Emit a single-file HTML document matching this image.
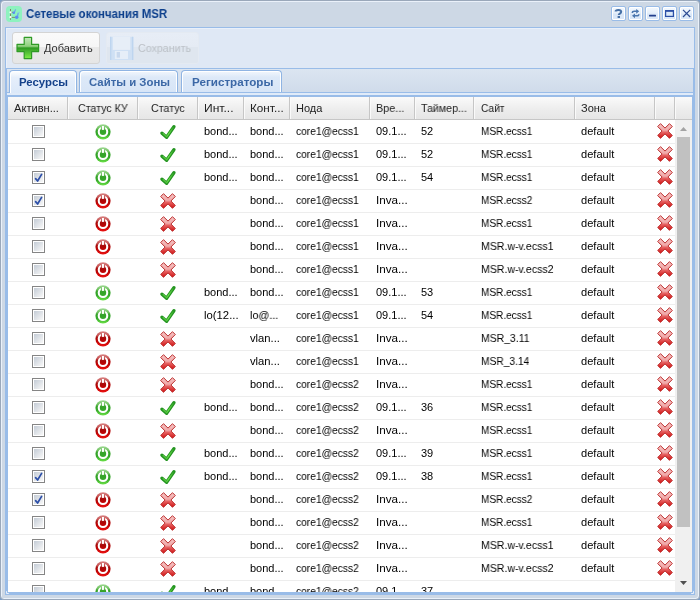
<!DOCTYPE html>
<html><head><meta charset="utf-8"><style>
*{box-sizing:border-box}
html,body{margin:0;padding:0;width:700px;height:600px;overflow:hidden;background:#7d9dc6;font-family:"Liberation Sans",sans-serif}
.txt,.hd,.tabt,.title{will-change:transform}
.a{position:absolute}
#win{position:absolute;left:0;top:0;width:700px;height:600px;background:#cdd8e5;border:1px solid #9aa8ba;border-radius:4px;box-shadow:inset 1px 1px 0 #eaf1fa,inset -1px -1px 0 #eaf1fa;overflow:hidden}
.title{left:26px;top:7px;font-weight:bold;font-size:12px;color:#0c3f8c;white-space:nowrap;line-height:14px}
.tool{top:6px;width:15px;height:15px;border:1px solid #99bce8;border-radius:2px;background:linear-gradient(#f4f9fe,#e6f0fb 45%,#d9e7f8 55%,#dbe8f8);box-shadow:inset 0 0 0 1px #fff}
.tool svg{position:absolute;left:0;top:0}
.txt{font-size:11px;color:#000;white-space:nowrap;line-height:13px}
.hd{font-size:11px;color:#222;white-space:nowrap;line-height:13px;top:102px}
.sep{top:97px;width:1px;height:22px;background:#c6c6c6;box-shadow:1px 0 0 #fafafa}
.rb{left:8px;width:667px;height:1px;background:#ededed}
.tab{top:70px;height:25px;border:1px solid #8fb4e3;border-bottom:none;border-radius:4px 4px 0 0;box-shadow:inset 1px 1px 0 #fff,inset -1px 0 0 #fff}
.tabt{font-weight:bold;font-size:11px;white-space:nowrap;line-height:13px}
</style></head><body><svg width="0" height="0" style="position:absolute">
<defs>
<linearGradient id="gG" gradientUnits="userSpaceOnUse" x1="0" y1="0" x2="0" y2="16"><stop offset="0" stop-color="#a6dc9c"/><stop offset="0.28" stop-color="#6cc05c"/><stop offset="0.42" stop-color="#34a228"/><stop offset="0.65" stop-color="#36a82a"/><stop offset="1" stop-color="#72e84c"/></linearGradient>
<linearGradient id="gR" gradientUnits="userSpaceOnUse" x1="0" y1="0" x2="0" y2="16"><stop offset="0" stop-color="#dc8c8c"/><stop offset="0.28" stop-color="#c45050"/><stop offset="0.42" stop-color="#a80808"/><stop offset="0.65" stop-color="#c00404"/><stop offset="1" stop-color="#f01414"/></linearGradient>
<linearGradient id="gX" x1="0" y1="0" x2="0" y2="1"><stop offset="0" stop-color="#f6c4c4"/><stop offset="0.45" stop-color="#f0a8a8"/><stop offset="0.6" stop-color="#e66060"/><stop offset="1" stop-color="#d01010"/></linearGradient>
<linearGradient id="gC" gradientUnits="userSpaceOnUse" x1="0" y1="14" x2="14" y2="2"><stop offset="0" stop-color="#2a9a22"/><stop offset="0.5" stop-color="#6ee04e"/><stop offset="1" stop-color="#2a9a22"/></linearGradient>
<linearGradient id="gCB" x1="0" y1="0" x2="1" y2="1"><stop offset="0" stop-color="#c4ccd6"/><stop offset="1" stop-color="#f8f8f8"/></linearGradient>
<linearGradient id="gP" x1="0" y1="0" x2="0" y2="1"><stop offset="0" stop-color="#c4e8bc"/><stop offset="0.42" stop-color="#8ed07c"/><stop offset="0.5" stop-color="#2e9a22"/><stop offset="0.62" stop-color="#44b030"/><stop offset="1" stop-color="#80f048"/></linearGradient>
<symbol id="pw" viewBox="0 0 16 16"><circle cx="8" cy="7.85" r="7.6"/><circle cx="8" cy="7.75" r="4.25" fill="none" stroke="#fff" stroke-width="2.1"/><rect x="5.9" y="1" width="4.2" height="5.3"/><rect x="6.95" y="2" width="2" height="3.9" fill="#fff"/></symbol>
<symbol id="ck" viewBox="0 0 16 16"><polyline points="2,9.2 6.6,13.3 13.9,2.7" fill="none" stroke="#239420" stroke-width="3.3" stroke-linecap="round" stroke-linejoin="round"/><polyline points="3,9.6 6.6,12.8 13.3,3.4" fill="none" stroke="url(#gC)" stroke-width="1.3" stroke-linecap="round" stroke-linejoin="round"/></symbol>
<symbol id="xx" viewBox="0 0 16 16"><path d="M0.7,3.5 L3.5,0.7 L8,5.1 L12.5,0.7 L15.3,3.5 L10.9,8 L15.3,12.5 L12.5,15.3 L8,10.9 L3.5,15.3 L0.7,12.5 L5.1,8 Z" fill="url(#gX)" stroke="#bc2e2e" stroke-width="1" stroke-linejoin="round"/></symbol>
<symbol id="cb" viewBox="0 0 13 13"><rect x="0.5" y="0.5" width="12" height="12" fill="#fff" stroke="#858585"/><rect x="2" y="2" width="9" height="9" fill="url(#gCB)"/></symbol>
<symbol id="cbc" viewBox="0 0 13 13"><rect x="0.5" y="0.5" width="12" height="12" fill="#fff" stroke="#858585"/><rect x="2" y="2" width="9" height="9" fill="url(#gCB)"/><polyline points="3.6,7.6 5.6,10 9.6,3.4" fill="none" stroke="#2d4fa8" stroke-width="1.7" stroke-linecap="round" stroke-linejoin="round"/></symbol>
</defs></svg><div id="win"></div><div class="a" style="left:6px;top:6px;width:16px;height:16px;border-radius:4px;background:#8ef2bf"></div>
<svg class="a" style="left:6px;top:6px" width="16" height="16" viewBox="0 0 16 16"><path d="M4.5,3 V13.8" stroke="#7a8860" stroke-width="1"/><path d="M4.6,6.3 H7.2 M4.6,11.4 H9.2" stroke="#7a8860" stroke-width="0.9"/><circle cx="4.5" cy="6.3" r="1.15" fill="#fff"/><circle cx="4.5" cy="11.2" r="1.15" fill="#fff"/><path d="M8.4,6.4 L9.6,3.4 M11.5,10.6 L12.2,6.8" stroke="#6a9cf2" stroke-width="1.2"/><circle cx="7.8" cy="6.7" r="1.3" fill="#5a8ef0"/><circle cx="10.7" cy="11.2" r="1.75" fill="#5a8ef0"/><path d="M12.2,7 L13.4,6.6" stroke="#8ab4f4" stroke-width="1"/></svg>
<div class="a title" style="transform:scaleX(0.951);transform-origin:0 0">Сетевые окончания MSR</div>
<div class="a tool" style="left:611px"><svg width="15" height="15" viewBox="0 0 15 15" style="left:-1px;top:-1px"><path d="M4.6,5.6 C4.6,3.4 10.2,3.2 10.2,5.8 C10.2,7.6 7.8,7.6 7.8,9" fill="none" stroke="#4670a6" stroke-width="2"/><rect x="6.6" y="10" width="2.4" height="2" fill="#4670a6"/></svg></div>
<div class="a tool" style="left:628px"><svg width="15" height="15" viewBox="0 0 15 15" style="left:-1px;top:-1px"><path d="M4.3,7 Q4.3,5.3 6.2,5.3 H9" fill="none" stroke="#4a76ae" stroke-width="1.5"/><path d="M8.2,2.9 L11.2,5.3 L8.2,7.7 Z" fill="#4a76ae"/><path d="M10.8,8.2 Q10.8,9.8 8.9,9.8 H6.2" fill="none" stroke="#4a76ae" stroke-width="1.5"/><path d="M7,7.4 L4,9.8 L7,12.2 Z" fill="#4a76ae"/></svg></div>
<div class="a tool" style="left:645px"><svg width="15" height="15" viewBox="0 0 15 15" style="left:-1px;top:-1px"><rect x="4" y="8.8" width="7" height="1.8" rx="0.6" fill="#223f8c"/></svg></div>
<div class="a tool" style="left:662px"><svg width="15" height="15" viewBox="0 0 15 15" style="left:-1px;top:-1px"><rect x="3.6" y="4.6" width="7.8" height="5.8" fill="#dbe8f8" stroke="#2c4fa6" stroke-width="1.2"/><rect x="3" y="4" width="9" height="1.8" fill="#2c4fa6"/></svg></div>
<div class="a tool" style="left:679px"><svg width="15" height="15" viewBox="0 0 15 15" style="left:-1px;top:-1px"><path d="M4,3.8 L11.2,11 M11.2,3.8 L4,11" stroke="#2c4a92" stroke-width="1.2"/></svg></div>
<div class="a" style="left:5px;top:27px;width:690px;height:42px;background:#dfe8f5;border:1px solid #99bce8;box-shadow:inset 1px 1px 0 #e9f0fa"></div>
<div class="a" style="left:12px;top:32px;width:88px;height:32px;border:1px solid #d4d4d4;border-radius:3px;background:linear-gradient(#fafafa 0,#f6f6f6 47%,#e9e9e9 47%,#e6e6e6 100%)"></div>
<svg class="a" style="left:16px;top:36px" width="24" height="24" viewBox="0 0 24 24"><path d="M8.2,1.4 H15.6 V8.4 H22.6 V15.6 H15.6 V22.6 H8.2 V15.6 H1 V8.4 H8.2 Z" fill="url(#gP)" stroke="#2f9a26" stroke-width="1.2" stroke-linejoin="round"/></svg>
<div class="a txt" style="left:44px;top:42px;color:#333;transform:scaleX(0.994);transform-origin:0 0">Добавить</div>
<div class="a" style="left:106px;top:32px;width:93px;height:32px;border:1px solid #e4eaf2;border-radius:3px;background:linear-gradient(#e7edf6 0,#e5ebf4 47%,#dfe6ef 47%,#dfe6ef 100%)"></div>
<svg class="a" style="left:109px;top:36px" width="25" height="25" viewBox="0 0 25 25"><rect x="1" y="0.8" width="23.3" height="23.2" fill="#cfe0f4"/><rect x="1" y="0.8" width="1.3" height="23.2" fill="#bed5ef"/><rect x="23" y="0.8" width="1.3" height="23.2" fill="#bed5ef"/><rect x="3.8" y="0.8" width="17.5" height="13.1" fill="#e7eef7"/><rect x="5.9" y="15" width="13.1" height="8" fill="#e6eef8"/><rect x="7.7" y="16" width="3.3" height="5.6" fill="#c8d8ed"/></svg>
<div class="a txt" style="left:138px;top:42px;color:#bcc1c7;transform:scaleX(0.969);transform-origin:0 0">Сохранить</div>
<div class="a" style="left:5px;top:68px;width:690px;height:527px;background:#99bce8"></div>
<div class="a" style="left:7px;top:69px;width:686px;height:24px;background:linear-gradient(#dbe5f1,#cfdbea)"></div>
<div class="a" style="left:7px;top:92px;width:686px;height:1px;background:#99bce8"></div>
<div class="a" style="left:7px;top:93px;width:686px;height:2px;background:#e0ebf9"></div>
<div class="a tab" style="left:9px;width:68px;height:23px;background:linear-gradient(#fff 0,#e6effb 30%,#dbe8f9 100%)"></div>
<div class="a tabt" style="left:19px;top:76px;color:#15428b;transform:scaleX(1.0348);transform-origin:0 0">Ресурсы</div>
<div class="a tab" style="left:79px;width:99px;height:22px;background:linear-gradient(#f2f7fd 0,#dde9f8 30%,#d7e5f7 100%)"></div>
<div class="a tabt" style="left:89px;top:76px;color:#3c68a6;transform:scaleX(1.0351);transform-origin:0 0">Сайты и Зоны</div>
<div class="a tab" style="left:181px;width:101px;height:22px;background:linear-gradient(#f2f7fd 0,#dde9f8 30%,#d7e5f7 100%)"></div>
<div class="a tabt" style="left:192px;top:76px;color:#3c68a6;transform:scaleX(1.0573);transform-origin:0 0">Регистраторы</div>
<div class="a" style="left:8px;top:97px;width:684px;height:495px;background:#fff"></div>
<div class="a" style="left:8px;top:97px;width:684px;height:23px;background:linear-gradient(#fafafa,#ececec 60%,#e6e6e6);border-bottom:1px solid #c6c6c6"></div>
<div class="a sep" style="left:67px"></div>
<div class="a sep" style="left:137px"></div>
<div class="a sep" style="left:197px"></div>
<div class="a sep" style="left:243px"></div>
<div class="a sep" style="left:289px"></div>
<div class="a sep" style="left:369px"></div>
<div class="a sep" style="left:414px"></div>
<div class="a sep" style="left:473px"></div>
<div class="a sep" style="left:574px"></div>
<div class="a sep" style="left:654px"></div>
<div class="a sep" style="left:674px"></div>
<div class="a hd" style="left:14px;transform:scaleX(1.0091);transform-origin:0 0">Активн...</div>
<div class="a hd" style="left:78px;transform:scaleX(0.9686);transform-origin:0 0">Статус КУ</div>
<div class="a hd" style="left:151px;transform:scaleX(0.9706);transform-origin:0 0">Статус</div>
<div class="a hd" style="left:204px;transform:scaleX(1.096);transform-origin:0 0">Инт...</div>
<div class="a hd" style="left:250px;transform:scaleX(1.0667);transform-origin:0 0">Конт...</div>
<div class="a hd" style="left:296px;transform:scaleX(0.992);transform-origin:0 0">Нода</div>
<div class="a hd" style="left:376px;transform:scaleX(0.9815);transform-origin:0 0">Вре...</div>
<div class="a hd" style="left:421px;transform:scaleX(0.966);transform-origin:0 0">Таймер...</div>
<div class="a hd" style="left:481px;transform:scaleX(0.928);transform-origin:0 0">Сайт</div>
<div class="a hd" style="left:581px;transform:scaleX(0.9917);transform-origin:0 0">Зона</div>
<div class="a" style="left:0;top:0;width:692px;height:592px;overflow:hidden">
<div class="a rb" style="top:143px"></div>
<svg class="a" style="left:32px;top:125px" width="13" height="13"><use href="#cb"/></svg>
<svg class="a" style="left:95px;top:124px;fill:url(#gG)" width="16" height="16"><use href="#pw"/></svg>
<svg class="a" style="left:160px;top:124px" width="16" height="16"><use href="#ck"/></svg>
<div class="a txt" style="left:204px;top:125px;transform:scaleX(0.9938);transform-origin:0 0">bond...</div>
<div class="a txt" style="left:250px;top:125px;transform:scaleX(0.9938);transform-origin:0 0">bond...</div>
<div class="a txt" style="left:296px;top:125px;transform:scaleX(0.9313);transform-origin:0 0">core1@ecss1</div>
<div class="a txt" style="left:376px;top:125px;transform:scaleX(0.99);transform-origin:0 0">09.1...</div>
<div class="a txt" style="left:421px;top:125px;transform:scaleX(1.0);transform-origin:0 0">52</div>
<div class="a txt" style="left:481px;top:125px;transform:scaleX(0.9145);transform-origin:0 0">MSR.ecss1</div>
<div class="a txt" style="left:581px;top:125px;transform:scaleX(1.0061);transform-origin:0 0">default</div>
<svg class="a" style="left:657px;top:123px" width="16" height="16"><use href="#xx"/></svg>
<div class="a rb" style="top:166px"></div>
<svg class="a" style="left:32px;top:148px" width="13" height="13"><use href="#cb"/></svg>
<svg class="a" style="left:95px;top:147px;fill:url(#gG)" width="16" height="16"><use href="#pw"/></svg>
<svg class="a" style="left:160px;top:147px" width="16" height="16"><use href="#ck"/></svg>
<div class="a txt" style="left:204px;top:148px;transform:scaleX(0.9938);transform-origin:0 0">bond...</div>
<div class="a txt" style="left:250px;top:148px;transform:scaleX(0.9938);transform-origin:0 0">bond...</div>
<div class="a txt" style="left:296px;top:148px;transform:scaleX(0.9313);transform-origin:0 0">core1@ecss1</div>
<div class="a txt" style="left:376px;top:148px;transform:scaleX(0.99);transform-origin:0 0">09.1...</div>
<div class="a txt" style="left:421px;top:148px;transform:scaleX(1.0);transform-origin:0 0">52</div>
<div class="a txt" style="left:481px;top:148px;transform:scaleX(0.9145);transform-origin:0 0">MSR.ecss1</div>
<div class="a txt" style="left:581px;top:148px;transform:scaleX(1.0061);transform-origin:0 0">default</div>
<svg class="a" style="left:657px;top:146px" width="16" height="16"><use href="#xx"/></svg>
<div class="a rb" style="top:189px"></div>
<svg class="a" style="left:32px;top:171px" width="13" height="13"><use href="#cbc"/></svg>
<svg class="a" style="left:95px;top:170px;fill:url(#gG)" width="16" height="16"><use href="#pw"/></svg>
<svg class="a" style="left:160px;top:170px" width="16" height="16"><use href="#ck"/></svg>
<div class="a txt" style="left:204px;top:171px;transform:scaleX(0.9938);transform-origin:0 0">bond...</div>
<div class="a txt" style="left:250px;top:171px;transform:scaleX(0.9938);transform-origin:0 0">bond...</div>
<div class="a txt" style="left:296px;top:171px;transform:scaleX(0.9313);transform-origin:0 0">core1@ecss1</div>
<div class="a txt" style="left:376px;top:171px;transform:scaleX(0.99);transform-origin:0 0">09.1...</div>
<div class="a txt" style="left:421px;top:171px;transform:scaleX(1);transform-origin:0 0">54</div>
<div class="a txt" style="left:481px;top:171px;transform:scaleX(0.9145);transform-origin:0 0">MSR.ecss1</div>
<div class="a txt" style="left:581px;top:171px;transform:scaleX(1.0061);transform-origin:0 0">default</div>
<svg class="a" style="left:657px;top:169px" width="16" height="16"><use href="#xx"/></svg>
<div class="a rb" style="top:212px"></div>
<svg class="a" style="left:32px;top:194px" width="13" height="13"><use href="#cbc"/></svg>
<svg class="a" style="left:95px;top:193px;fill:url(#gR)" width="16" height="16"><use href="#pw"/></svg>
<svg class="a" style="left:160px;top:193px" width="16" height="16"><use href="#xx"/></svg>
<div class="a txt" style="left:250px;top:194px;transform:scaleX(0.9938);transform-origin:0 0">bond...</div>
<div class="a txt" style="left:296px;top:194px;transform:scaleX(0.9313);transform-origin:0 0">core1@ecss1</div>
<div class="a txt" style="left:376px;top:194px;transform:scaleX(1.0607);transform-origin:0 0">Inva...</div>
<div class="a txt" style="left:481px;top:194px;transform:scaleX(0.9145);transform-origin:0 0">MSR.ecss2</div>
<div class="a txt" style="left:581px;top:194px;transform:scaleX(1.0061);transform-origin:0 0">default</div>
<svg class="a" style="left:657px;top:192px" width="16" height="16"><use href="#xx"/></svg>
<div class="a rb" style="top:235px"></div>
<svg class="a" style="left:32px;top:217px" width="13" height="13"><use href="#cb"/></svg>
<svg class="a" style="left:95px;top:216px;fill:url(#gR)" width="16" height="16"><use href="#pw"/></svg>
<svg class="a" style="left:160px;top:216px" width="16" height="16"><use href="#xx"/></svg>
<div class="a txt" style="left:250px;top:217px;transform:scaleX(0.9938);transform-origin:0 0">bond...</div>
<div class="a txt" style="left:296px;top:217px;transform:scaleX(0.9313);transform-origin:0 0">core1@ecss1</div>
<div class="a txt" style="left:376px;top:217px;transform:scaleX(1.0607);transform-origin:0 0">Inva...</div>
<div class="a txt" style="left:481px;top:217px;transform:scaleX(0.9145);transform-origin:0 0">MSR.ecss1</div>
<div class="a txt" style="left:581px;top:217px;transform:scaleX(1.0061);transform-origin:0 0">default</div>
<svg class="a" style="left:657px;top:215px" width="16" height="16"><use href="#xx"/></svg>
<div class="a rb" style="top:258px"></div>
<svg class="a" style="left:32px;top:240px" width="13" height="13"><use href="#cb"/></svg>
<svg class="a" style="left:95px;top:239px;fill:url(#gR)" width="16" height="16"><use href="#pw"/></svg>
<svg class="a" style="left:160px;top:239px" width="16" height="16"><use href="#xx"/></svg>
<div class="a txt" style="left:250px;top:240px;transform:scaleX(0.9938);transform-origin:0 0">bond...</div>
<div class="a txt" style="left:296px;top:240px;transform:scaleX(0.9313);transform-origin:0 0">core1@ecss1</div>
<div class="a txt" style="left:376px;top:240px;transform:scaleX(1.0607);transform-origin:0 0">Inva...</div>
<div class="a txt" style="left:481px;top:240px;transform:scaleX(0.9595);transform-origin:0 0">MSR.w-v.ecss1</div>
<div class="a txt" style="left:581px;top:240px;transform:scaleX(1.0061);transform-origin:0 0">default</div>
<svg class="a" style="left:657px;top:238px" width="16" height="16"><use href="#xx"/></svg>
<div class="a rb" style="top:281px"></div>
<svg class="a" style="left:32px;top:263px" width="13" height="13"><use href="#cb"/></svg>
<svg class="a" style="left:95px;top:262px;fill:url(#gR)" width="16" height="16"><use href="#pw"/></svg>
<svg class="a" style="left:160px;top:262px" width="16" height="16"><use href="#xx"/></svg>
<div class="a txt" style="left:250px;top:263px;transform:scaleX(0.9938);transform-origin:0 0">bond...</div>
<div class="a txt" style="left:296px;top:263px;transform:scaleX(0.9313);transform-origin:0 0">core1@ecss1</div>
<div class="a txt" style="left:376px;top:263px;transform:scaleX(1.0607);transform-origin:0 0">Inva...</div>
<div class="a txt" style="left:481px;top:263px;transform:scaleX(0.9595);transform-origin:0 0">MSR.w-v.ecss2</div>
<div class="a txt" style="left:581px;top:263px;transform:scaleX(1.0061);transform-origin:0 0">default</div>
<svg class="a" style="left:657px;top:261px" width="16" height="16"><use href="#xx"/></svg>
<div class="a rb" style="top:304px"></div>
<svg class="a" style="left:32px;top:286px" width="13" height="13"><use href="#cb"/></svg>
<svg class="a" style="left:95px;top:285px;fill:url(#gG)" width="16" height="16"><use href="#pw"/></svg>
<svg class="a" style="left:160px;top:285px" width="16" height="16"><use href="#ck"/></svg>
<div class="a txt" style="left:204px;top:286px;transform:scaleX(0.9938);transform-origin:0 0">bond...</div>
<div class="a txt" style="left:250px;top:286px;transform:scaleX(0.9938);transform-origin:0 0">bond...</div>
<div class="a txt" style="left:296px;top:286px;transform:scaleX(0.9313);transform-origin:0 0">core1@ecss1</div>
<div class="a txt" style="left:376px;top:286px;transform:scaleX(0.99);transform-origin:0 0">09.1...</div>
<div class="a txt" style="left:421px;top:286px;transform:scaleX(1);transform-origin:0 0">53</div>
<div class="a txt" style="left:481px;top:286px;transform:scaleX(0.9145);transform-origin:0 0">MSR.ecss1</div>
<div class="a txt" style="left:581px;top:286px;transform:scaleX(1.0061);transform-origin:0 0">default</div>
<svg class="a" style="left:657px;top:284px" width="16" height="16"><use href="#xx"/></svg>
<div class="a rb" style="top:327px"></div>
<svg class="a" style="left:32px;top:309px" width="13" height="13"><use href="#cb"/></svg>
<svg class="a" style="left:95px;top:308px;fill:url(#gG)" width="16" height="16"><use href="#pw"/></svg>
<svg class="a" style="left:160px;top:308px" width="16" height="16"><use href="#ck"/></svg>
<div class="a txt" style="left:204px;top:309px;transform:scaleX(1.0281);transform-origin:0 0">lo(12...</div>
<div class="a txt" style="left:250px;top:309px;transform:scaleX(0.9778);transform-origin:0 0">lo@...</div>
<div class="a txt" style="left:296px;top:309px;transform:scaleX(0.9313);transform-origin:0 0">core1@ecss1</div>
<div class="a txt" style="left:376px;top:309px;transform:scaleX(0.99);transform-origin:0 0">09.1...</div>
<div class="a txt" style="left:421px;top:309px;transform:scaleX(1);transform-origin:0 0">54</div>
<div class="a txt" style="left:481px;top:309px;transform:scaleX(0.9145);transform-origin:0 0">MSR.ecss1</div>
<div class="a txt" style="left:581px;top:309px;transform:scaleX(1.0061);transform-origin:0 0">default</div>
<svg class="a" style="left:657px;top:307px" width="16" height="16"><use href="#xx"/></svg>
<div class="a rb" style="top:350px"></div>
<svg class="a" style="left:32px;top:332px" width="13" height="13"><use href="#cb"/></svg>
<svg class="a" style="left:95px;top:331px;fill:url(#gR)" width="16" height="16"><use href="#pw"/></svg>
<svg class="a" style="left:160px;top:331px" width="16" height="16"><use href="#xx"/></svg>
<div class="a txt" style="left:250px;top:332px;transform:scaleX(1.0214);transform-origin:0 0">vlan...</div>
<div class="a txt" style="left:296px;top:332px;transform:scaleX(0.9313);transform-origin:0 0">core1@ecss1</div>
<div class="a txt" style="left:376px;top:332px;transform:scaleX(1.0607);transform-origin:0 0">Inva...</div>
<div class="a txt" style="left:481px;top:332px;transform:scaleX(0.948);transform-origin:0 0">MSR_3.11</div>
<div class="a txt" style="left:581px;top:332px;transform:scaleX(1.0061);transform-origin:0 0">default</div>
<svg class="a" style="left:657px;top:330px" width="16" height="16"><use href="#xx"/></svg>
<div class="a rb" style="top:373px"></div>
<svg class="a" style="left:32px;top:355px" width="13" height="13"><use href="#cb"/></svg>
<svg class="a" style="left:95px;top:354px;fill:url(#gR)" width="16" height="16"><use href="#pw"/></svg>
<svg class="a" style="left:160px;top:354px" width="16" height="16"><use href="#xx"/></svg>
<div class="a txt" style="left:250px;top:355px;transform:scaleX(1.0214);transform-origin:0 0">vlan...</div>
<div class="a txt" style="left:296px;top:355px;transform:scaleX(0.9313);transform-origin:0 0">core1@ecss1</div>
<div class="a txt" style="left:376px;top:355px;transform:scaleX(1.0607);transform-origin:0 0">Inva...</div>
<div class="a txt" style="left:481px;top:355px;transform:scaleX(0.9294);transform-origin:0 0">MSR_3.14</div>
<div class="a txt" style="left:581px;top:355px;transform:scaleX(1.0061);transform-origin:0 0">default</div>
<svg class="a" style="left:657px;top:353px" width="16" height="16"><use href="#xx"/></svg>
<div class="a rb" style="top:396px"></div>
<svg class="a" style="left:32px;top:378px" width="13" height="13"><use href="#cb"/></svg>
<svg class="a" style="left:95px;top:377px;fill:url(#gR)" width="16" height="16"><use href="#pw"/></svg>
<svg class="a" style="left:160px;top:377px" width="16" height="16"><use href="#xx"/></svg>
<div class="a txt" style="left:250px;top:378px;transform:scaleX(0.9938);transform-origin:0 0">bond...</div>
<div class="a txt" style="left:296px;top:378px;transform:scaleX(0.9313);transform-origin:0 0">core1@ecss2</div>
<div class="a txt" style="left:376px;top:378px;transform:scaleX(1.0607);transform-origin:0 0">Inva...</div>
<div class="a txt" style="left:481px;top:378px;transform:scaleX(0.9145);transform-origin:0 0">MSR.ecss1</div>
<div class="a txt" style="left:581px;top:378px;transform:scaleX(1.0061);transform-origin:0 0">default</div>
<svg class="a" style="left:657px;top:376px" width="16" height="16"><use href="#xx"/></svg>
<div class="a rb" style="top:419px"></div>
<svg class="a" style="left:32px;top:401px" width="13" height="13"><use href="#cb"/></svg>
<svg class="a" style="left:95px;top:400px;fill:url(#gG)" width="16" height="16"><use href="#pw"/></svg>
<svg class="a" style="left:160px;top:400px" width="16" height="16"><use href="#ck"/></svg>
<div class="a txt" style="left:204px;top:401px;transform:scaleX(0.9938);transform-origin:0 0">bond...</div>
<div class="a txt" style="left:250px;top:401px;transform:scaleX(0.9938);transform-origin:0 0">bond...</div>
<div class="a txt" style="left:296px;top:401px;transform:scaleX(0.9313);transform-origin:0 0">core1@ecss2</div>
<div class="a txt" style="left:376px;top:401px;transform:scaleX(0.99);transform-origin:0 0">09.1...</div>
<div class="a txt" style="left:421px;top:401px;transform:scaleX(1);transform-origin:0 0">36</div>
<div class="a txt" style="left:481px;top:401px;transform:scaleX(0.9145);transform-origin:0 0">MSR.ecss1</div>
<div class="a txt" style="left:581px;top:401px;transform:scaleX(1.0061);transform-origin:0 0">default</div>
<svg class="a" style="left:657px;top:399px" width="16" height="16"><use href="#xx"/></svg>
<div class="a rb" style="top:442px"></div>
<svg class="a" style="left:32px;top:424px" width="13" height="13"><use href="#cb"/></svg>
<svg class="a" style="left:95px;top:423px;fill:url(#gR)" width="16" height="16"><use href="#pw"/></svg>
<svg class="a" style="left:160px;top:423px" width="16" height="16"><use href="#xx"/></svg>
<div class="a txt" style="left:250px;top:424px;transform:scaleX(0.9938);transform-origin:0 0">bond...</div>
<div class="a txt" style="left:296px;top:424px;transform:scaleX(0.9313);transform-origin:0 0">core1@ecss2</div>
<div class="a txt" style="left:376px;top:424px;transform:scaleX(1.0607);transform-origin:0 0">Inva...</div>
<div class="a txt" style="left:481px;top:424px;transform:scaleX(0.9145);transform-origin:0 0">MSR.ecss1</div>
<div class="a txt" style="left:581px;top:424px;transform:scaleX(1.0061);transform-origin:0 0">default</div>
<svg class="a" style="left:657px;top:422px" width="16" height="16"><use href="#xx"/></svg>
<div class="a rb" style="top:465px"></div>
<svg class="a" style="left:32px;top:447px" width="13" height="13"><use href="#cb"/></svg>
<svg class="a" style="left:95px;top:446px;fill:url(#gG)" width="16" height="16"><use href="#pw"/></svg>
<svg class="a" style="left:160px;top:446px" width="16" height="16"><use href="#ck"/></svg>
<div class="a txt" style="left:204px;top:447px;transform:scaleX(0.9938);transform-origin:0 0">bond...</div>
<div class="a txt" style="left:250px;top:447px;transform:scaleX(0.9938);transform-origin:0 0">bond...</div>
<div class="a txt" style="left:296px;top:447px;transform:scaleX(0.9313);transform-origin:0 0">core1@ecss2</div>
<div class="a txt" style="left:376px;top:447px;transform:scaleX(0.99);transform-origin:0 0">09.1...</div>
<div class="a txt" style="left:421px;top:447px;transform:scaleX(1);transform-origin:0 0">39</div>
<div class="a txt" style="left:481px;top:447px;transform:scaleX(0.9145);transform-origin:0 0">MSR.ecss1</div>
<div class="a txt" style="left:581px;top:447px;transform:scaleX(1.0061);transform-origin:0 0">default</div>
<svg class="a" style="left:657px;top:445px" width="16" height="16"><use href="#xx"/></svg>
<div class="a rb" style="top:488px"></div>
<svg class="a" style="left:32px;top:470px" width="13" height="13"><use href="#cbc"/></svg>
<svg class="a" style="left:95px;top:469px;fill:url(#gG)" width="16" height="16"><use href="#pw"/></svg>
<svg class="a" style="left:160px;top:469px" width="16" height="16"><use href="#ck"/></svg>
<div class="a txt" style="left:204px;top:470px;transform:scaleX(0.9938);transform-origin:0 0">bond...</div>
<div class="a txt" style="left:250px;top:470px;transform:scaleX(0.9938);transform-origin:0 0">bond...</div>
<div class="a txt" style="left:296px;top:470px;transform:scaleX(0.9313);transform-origin:0 0">core1@ecss2</div>
<div class="a txt" style="left:376px;top:470px;transform:scaleX(0.99);transform-origin:0 0">09.1...</div>
<div class="a txt" style="left:421px;top:470px;transform:scaleX(1);transform-origin:0 0">38</div>
<div class="a txt" style="left:481px;top:470px;transform:scaleX(0.9145);transform-origin:0 0">MSR.ecss1</div>
<div class="a txt" style="left:581px;top:470px;transform:scaleX(1.0061);transform-origin:0 0">default</div>
<svg class="a" style="left:657px;top:468px" width="16" height="16"><use href="#xx"/></svg>
<div class="a rb" style="top:511px"></div>
<svg class="a" style="left:32px;top:493px" width="13" height="13"><use href="#cbc"/></svg>
<svg class="a" style="left:95px;top:492px;fill:url(#gR)" width="16" height="16"><use href="#pw"/></svg>
<svg class="a" style="left:160px;top:492px" width="16" height="16"><use href="#xx"/></svg>
<div class="a txt" style="left:250px;top:493px;transform:scaleX(0.9938);transform-origin:0 0">bond...</div>
<div class="a txt" style="left:296px;top:493px;transform:scaleX(0.9313);transform-origin:0 0">core1@ecss2</div>
<div class="a txt" style="left:376px;top:493px;transform:scaleX(1.0607);transform-origin:0 0">Inva...</div>
<div class="a txt" style="left:481px;top:493px;transform:scaleX(0.9145);transform-origin:0 0">MSR.ecss2</div>
<div class="a txt" style="left:581px;top:493px;transform:scaleX(1.0061);transform-origin:0 0">default</div>
<svg class="a" style="left:657px;top:491px" width="16" height="16"><use href="#xx"/></svg>
<div class="a rb" style="top:534px"></div>
<svg class="a" style="left:32px;top:516px" width="13" height="13"><use href="#cb"/></svg>
<svg class="a" style="left:95px;top:515px;fill:url(#gR)" width="16" height="16"><use href="#pw"/></svg>
<svg class="a" style="left:160px;top:515px" width="16" height="16"><use href="#xx"/></svg>
<div class="a txt" style="left:250px;top:516px;transform:scaleX(0.9938);transform-origin:0 0">bond...</div>
<div class="a txt" style="left:296px;top:516px;transform:scaleX(0.9313);transform-origin:0 0">core1@ecss2</div>
<div class="a txt" style="left:376px;top:516px;transform:scaleX(1.0607);transform-origin:0 0">Inva...</div>
<div class="a txt" style="left:481px;top:516px;transform:scaleX(0.9145);transform-origin:0 0">MSR.ecss1</div>
<div class="a txt" style="left:581px;top:516px;transform:scaleX(1.0061);transform-origin:0 0">default</div>
<svg class="a" style="left:657px;top:514px" width="16" height="16"><use href="#xx"/></svg>
<div class="a rb" style="top:557px"></div>
<svg class="a" style="left:32px;top:539px" width="13" height="13"><use href="#cb"/></svg>
<svg class="a" style="left:95px;top:538px;fill:url(#gR)" width="16" height="16"><use href="#pw"/></svg>
<svg class="a" style="left:160px;top:538px" width="16" height="16"><use href="#xx"/></svg>
<div class="a txt" style="left:250px;top:539px;transform:scaleX(0.9938);transform-origin:0 0">bond...</div>
<div class="a txt" style="left:296px;top:539px;transform:scaleX(0.9313);transform-origin:0 0">core1@ecss2</div>
<div class="a txt" style="left:376px;top:539px;transform:scaleX(1.0607);transform-origin:0 0">Inva...</div>
<div class="a txt" style="left:481px;top:539px;transform:scaleX(0.9595);transform-origin:0 0">MSR.w-v.ecss1</div>
<div class="a txt" style="left:581px;top:539px;transform:scaleX(1.0061);transform-origin:0 0">default</div>
<svg class="a" style="left:657px;top:537px" width="16" height="16"><use href="#xx"/></svg>
<div class="a rb" style="top:580px"></div>
<svg class="a" style="left:32px;top:562px" width="13" height="13"><use href="#cb"/></svg>
<svg class="a" style="left:95px;top:561px;fill:url(#gR)" width="16" height="16"><use href="#pw"/></svg>
<svg class="a" style="left:160px;top:561px" width="16" height="16"><use href="#xx"/></svg>
<div class="a txt" style="left:250px;top:562px;transform:scaleX(0.9938);transform-origin:0 0">bond...</div>
<div class="a txt" style="left:296px;top:562px;transform:scaleX(0.9313);transform-origin:0 0">core1@ecss2</div>
<div class="a txt" style="left:376px;top:562px;transform:scaleX(1.0607);transform-origin:0 0">Inva...</div>
<div class="a txt" style="left:481px;top:562px;transform:scaleX(0.9595);transform-origin:0 0">MSR.w-v.ecss2</div>
<div class="a txt" style="left:581px;top:562px;transform:scaleX(1.0061);transform-origin:0 0">default</div>
<svg class="a" style="left:657px;top:560px" width="16" height="16"><use href="#xx"/></svg>
<svg class="a" style="left:32px;top:585px" width="13" height="13"><use href="#cb"/></svg>
<svg class="a" style="left:95px;top:584px;fill:url(#gG)" width="16" height="16"><use href="#pw"/></svg>
<svg class="a" style="left:160px;top:584px" width="16" height="16"><use href="#ck"/></svg>
<div class="a txt" style="left:204px;top:585px;transform:scaleX(0.9938);transform-origin:0 0">bond...</div>
<div class="a txt" style="left:250px;top:585px;transform:scaleX(0.9938);transform-origin:0 0">bond...</div>
<div class="a txt" style="left:296px;top:585px;transform:scaleX(0.9313);transform-origin:0 0">core1@ecss2</div>
<div class="a txt" style="left:376px;top:585px;transform:scaleX(0.99);transform-origin:0 0">09.1...</div>
<div class="a txt" style="left:421px;top:585px;transform:scaleX(1);transform-origin:0 0">37</div>
</div>
<div class="a" style="left:675px;top:120px;width:17px;height:472px;background:#f0f0f0"></div>
<svg class="a" style="left:675px;top:120px" width="17" height="472"><path d="M5,11 L8.5,7 L12,11 Z" fill="#a3a3a3"/><rect x="2" y="17" width="13" height="390" fill="#c1c1c1"/><path d="M5,461 L12,461 L8.5,465 Z" fill="#505050"/></svg>
<div class="a" style="left:5px;top:592px;width:690px;height:3px;background:#99bce8"></div>
<div class="a" style="left:692px;top:97px;width:3px;height:498px;background:#99bce8"></div>
<svg class="a" style="left:5px;top:590px" width="6" height="6"><path d="M1.5,1.2 V3.5 H3.8" fill="none" stroke="#e8f0fb" stroke-width="1"/></svg>
<svg class="a" style="left:690px;top:590px" width="6" height="6"><path d="M3.5,1.2 V3.5 H1.2" fill="none" stroke="#e8f0fb" stroke-width="1"/></svg></body></html>
